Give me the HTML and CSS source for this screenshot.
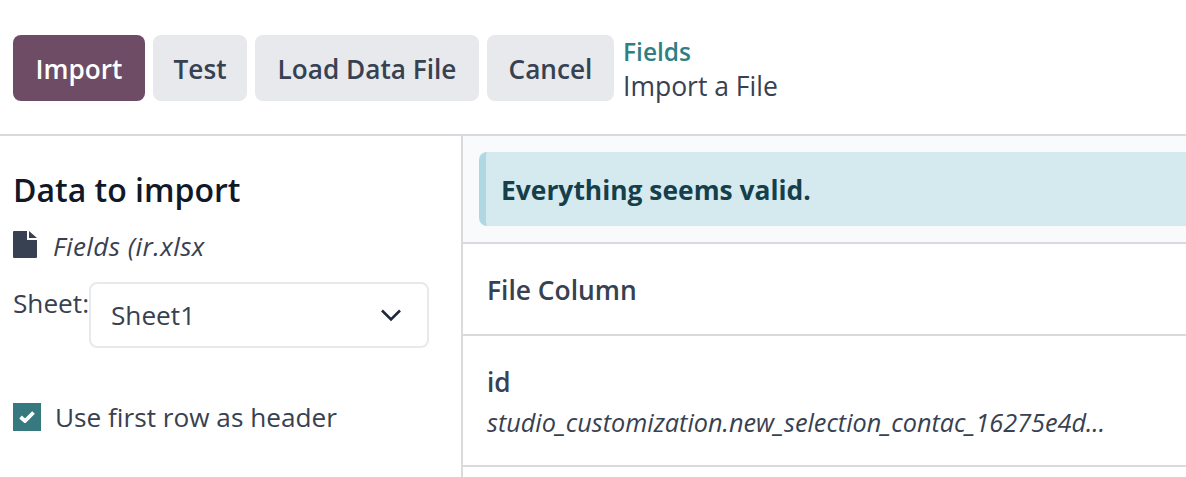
FILE: index.html
```html
<!DOCTYPE html>
<html lang="en">
<head>
<meta charset="utf-8">
<title>Import a File</title>
<link rel="stylesheet" href="styles.css">
</head>
<body>
<header class="control">
  <div class="buttons">
    <button class="btn btn-primary">Import</button>
    <button class="btn">Test</button>
    <button class="btn">Load Data File</button>
    <button class="btn">Cancel</button>
  </div>
  <div class="crumbs">
    <a class="crumb-link">Fields</a>
    <span class="crumb-current">Import a File</span>
  </div>
</header>
<main class="content">
  <aside class="side">
    <h2 class="side-title">Data to import</h2>
    <div class="file-row">
      <svg class="file-icon" viewBox="0 0 24 27" width="24" height="27"><path fill="#374151" d="M0 1a1 1 0 0 1 1-1h13v9h10v17a1 1 0 0 1-1 1H1a1 1 0 0 1-1-1zM16 0l8 7h-8z"/></svg>
      <em class="file-name">Fields (ir.xlsx</em>
    </div>
    <div class="sheet-row">
      <label class="sheet-label">Sheet:</label>
      <div class="select">
        <span>Sheet1</span>
        <svg class="chevron" viewBox="0 0 22 14" width="22" height="14"><path d="M2 2.5l9 9 9-9" fill="none" stroke="#1f2937" stroke-width="2.6"/></svg>
      </div>
    </div>
    <div class="check-row">
      <span class="checkbox"><svg viewBox="0 0 16 12" width="16" height="12"><path d="M1.5 6l4.5 4 8.5-8.5" fill="none" stroke="#fff" stroke-width="3.8"/></svg></span>
      <span>Use first row as header</span>
    </div>
  </aside>
  <section class="main">
    <div class="alert-wrap">
      <div class="alert">Everything seems valid.</div>
    </div>
    <div class="row row-head">File Column</div>
    <div class="row row-field">
      <div class="field-name">id</div>
      <em class="field-sample">studio_customization.new_selection_contac_16275e4d...</em>
    </div>
  </section>
</main>
</body>
</html>
```
FILE: styles.css
```css
* { box-sizing: border-box; }
html, body { margin: 0; height: 100%; }
body {
  width: 1186px;
  height: 477px;
  overflow: hidden;
  background: #fff;
  color: #374151;
  font-family: "Open Sans", "Noto Sans", sans-serif;
  font-size: 26.2px;
}
.control {
  height: 136px;
  padding: 35px 13px 0;
  display: flex;
  align-items: flex-start;
  gap: 9px;
  border-bottom: 2px solid #d8dadd;
}
.buttons { display: flex; gap: 8px; }
.btn {
  height: 66px;
  border: 0;
  border-radius: 8px;
  background: #e7e9ed;
  color: #374151;
  font: 600 26.2px "Open Sans", sans-serif;
  padding: 2px 0 0;
}
.btn:nth-child(1) { width: 132px; }
.btn:nth-child(2) { width: 94px; }
.btn:nth-child(3) { width: 224px; }
.btn:nth-child(4) { width: 127px; }
.btn-primary { background: #6e4c65; color: #fff; }
.crumbs { display: flex; flex-direction: column; line-height: 35px; margin-top: -1px; }
.crumb-link { color: #2f7f86; font-size: 24.5px; font-weight: 600; }
.crumb-current { font-size: 26.5px; }
.content { display: flex; height: 341px; }
.side {
  width: 463px;
  flex: none;
  padding: 34px 32px 0 13px;
  border-right: 2px solid #d8dadd;
}
.side-title { margin: 0; font-size: 32px; font-weight: 600; line-height: 40px; color: #111827; }
.file-row { display: flex; align-items: center; gap: 16px; margin-top: 18px; height: 36px; }
.file-icon { margin-top: -3px; }
.file-name { display: block; font-size: 26px; letter-spacing: .45px; }
.sheet-row { display: flex; align-items: flex-start; margin-top: 18px; }
.sheet-label { line-height: 42px; width: 76px; flex: none; }
.select {
  width: 340px;
  height: 66px;
  border: 2px solid #e7e9ed;
  border-radius: 8px;
  display: flex;
  align-items: center;
  justify-content: space-between;
  padding: 0 25px 0 20px;
}
.check-row { display: flex; align-items: center; gap: 14px; margin-top: 51px; }
.checkbox {
  width: 28px;
  height: 28px;
  background: #36797f;
  display: flex;
  align-items: center;
  justify-content: center;
}
.main { flex: 1; min-width: 0; }
.alert-wrap { background: #f9fafb; padding: 16px 0 16px 16px; border-bottom: 2px solid #d8dadd; overflow: hidden; }
.alert {
  width: 800px;
  height: 74px;
  line-height: 76px;
  padding-left: 15px;
  background: #d5eaef;
  border-left: 7px solid #b0d8e2;
  border-radius: 8px;
  color: #153f4b;
  font-weight: 700;
  font-size: 26.4px;
}
.row { padding-left: 24px; border-bottom: 2px solid #d8dadd; }
.row-head { height: 92px; line-height: 92px; font-weight: 600; font-size: 26.4px; }
.row-field { height: 131px; padding-top: 27px; }
.field-name { font-weight: 600; line-height: 38px; }
.field-sample { display: block; line-height: 43px; white-space: nowrap; font-size: 25.25px; }
```
